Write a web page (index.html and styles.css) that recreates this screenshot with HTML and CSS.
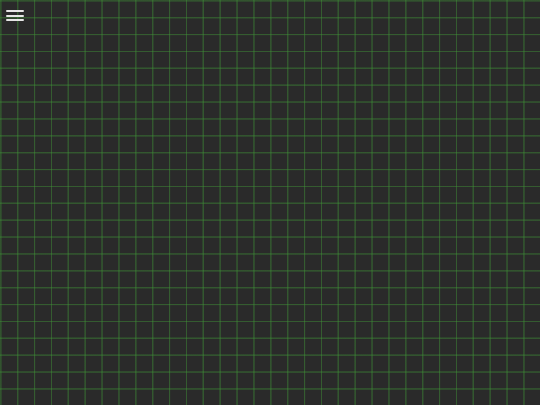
FILE: index.html
```html
<!DOCTYPE html>
<html lang="en">
<head>
<meta charset="utf-8">
<title>Grid</title>
<link rel="stylesheet" href="styles.css">
</head>
<body>
<main class="canvas">
  <button class="menu-btn" aria-label="Menu">
    <span class="bar"></span>
    <span class="bar"></span>
    <span class="bar"></span>
  </button>
</main>
</body>
</html>
```

FILE: styles.css
```css
html, body {
  margin: 0;
  padding: 0;
  height: 100%;
  background: #2a2a2a;
  font-family: "Liberation Sans", Arial, sans-serif;
}

.canvas {
  position: relative;
  width: 540px;
  height: 405px;
  background-color: #2a2a2a;
  background-image:
    repeating-linear-gradient(to right,
      rgba(55, 130, 50, 0.28) 0px,
      rgba(65, 150, 55, 0.48) 0.8px,
      rgba(55, 130, 50, 0.28) 1.6px,
      transparent 1.8px,
      transparent 16.875px),
    repeating-linear-gradient(to bottom,
      rgba(55, 130, 50, 0.28) 0px,
      rgba(65, 150, 55, 0.48) 0.8px,
      rgba(55, 130, 50, 0.28) 1.6px,
      transparent 1.8px,
      transparent 16.875px);
  overflow: hidden;
}

.menu-btn {
  position: absolute;
  top: 9px;
  left: 5px;
  display: flex;
  flex-direction: column;
  gap: 2.5px;
  padding: 1px;
  margin: 0;
  border: 0;
  background: transparent;
  cursor: pointer;
}

.bar {
  display: block;
  width: 18px;
  height: 2px;
  border-radius: 1px;
  background: #e6e6e6;
}
```
